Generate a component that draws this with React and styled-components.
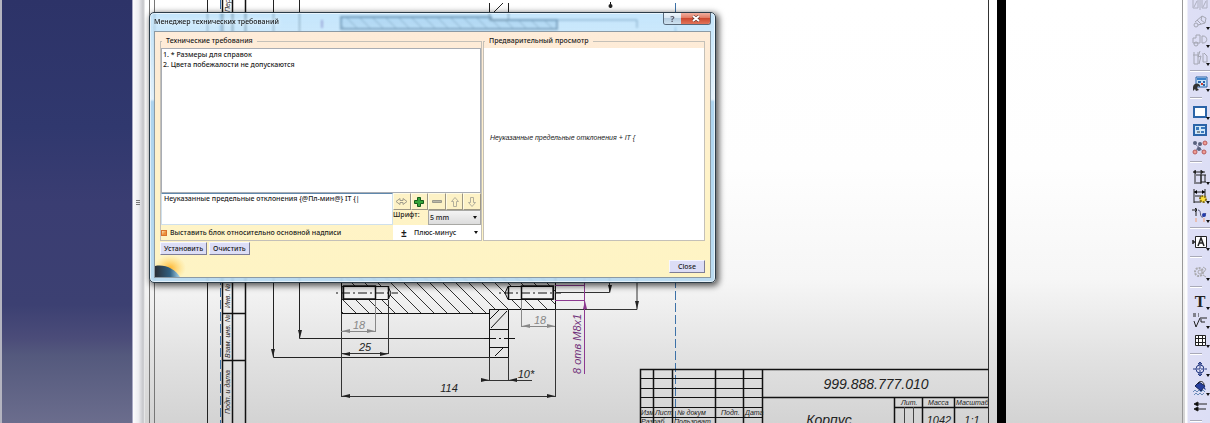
import { useState } from 'react'
import styled, { createGlobalStyle } from 'styled-components'

const GlobalStyle = createGlobalStyle`
    * {
        box-sizing: border-box;
    }
    body {
        margin: 0;
        overflow: hidden;
        font-family: 'Noto Sans', 'Open Sans', sans-serif;
        font-size: 7px;
        font-weight: 500;
        line-height: 10px;
        color: #1a1a1a;
    }
    button, input, select, textarea {
        font: inherit;
        color: inherit;
        margin: 0;
        padding: 0;
    }
`
const Workbench = styled.div`
    display: grid;
    grid-template-columns: 133px 12px 1fr 25px;
    height: 100vh;
    overflow: hidden;
`
const TreePanel = styled.aside`
    border-left: 2px solid #b4b4c0;
    border-right: 1px solid #a9a9c4;
    background: linear-gradient(#2d3368 0%, #30386e 30%, #3a3d72 48%, #3c4072 72%, #4b4c79 80%, #54597d 84%, #6b6d8d 100%);
`
const Splitter = styled.div`
    display: flex;
    align-items: center;
    justify-content: center;
    padding-bottom: 18px;
    background: linear-gradient(90deg, #fbfbfd, #ededf1 45%, #c4c5c9 85%, #f2f2f2);
`
const Grip = styled.div`
    width: 4px;
    height: 5px;
    margin-right: 3px;
    background: repeating-linear-gradient(#777 0 1px, transparent 1px 2px);
`
const Canvas = styled.main`
    position: relative;
    min-width: 0;
    background: linear-gradient(#fff 0%, #fefefe 40%, #f6f6f6 66%, #e2e2e2 84%, #d3d3d3 100%);
`
const Drawing = styled.svg`
    display: block;
    width: 100%;
    height: 100%;
    font-family: 'Liberation Sans', sans-serif;
    font-style: italic;
    font-weight: 400;
    fill: #222;
`

// ---- dialog ----
const Dialog = styled.section`
    position: absolute;
    left: 4px;
    top: 12px;
    width: 567px;
    padding: 0 4px 4px;
    border: 1px solid #2c3c48;
    border-radius: 5px;
    background: linear-gradient(rgba(165, 216, 250, .65), rgba(222, 240, 252, .85) 32%, rgba(164, 208, 238, .9) 33%, rgba(180, 216, 240, .9));
    backdrop-filter: blur(1px);
    box-shadow: inset 0 0 0 1px rgba(255, 255, 255, .6), 2px 2px 6px 1px rgba(0, 0, 0, .65);
`
const TitleBar = styled.header`
    display: flex;
    justify-content: space-between;
    height: 18px;
`
const Title = styled.h1`
    margin: 0;
    font-size: 7px;
    font-weight: 500;
    line-height: 18px;
    text-shadow: 0 0 4px #fff;
`
const WindowButtons = styled.div`
    display: flex;
    height: 12px;
    border: 1px solid #58697a;
    border-top: 0;
    border-radius: 0 0 3px 3px;
    overflow: hidden;
`
const WindowButton = styled.button`
    display: grid;
    place-items: center;
    width: ${p => p.$danger ? 29 : 17}px;
    border: 0;
    font-size: 9px;
    font-weight: 700;
    color: #556;
    background: ${p => p.$danger
        ? 'linear-gradient(#f0b0a0, #e27a62 45%, #cc4a30 50%, #e2745a)'
        : 'linear-gradient(#eef6fc, #d6e6f2 45%, #b5cde0 50%, #cfe2f0)'};
`
const Client = styled.div`
    position: relative;
    padding: 4px 5px;
    border: 1px solid #8c9aa4;
    background: linear-gradient(#feecd9 0%, #fdebd4 15%, #fff3c8 60%, #fef4c4 100%);
`
const Columns = styled.div`
    display: grid;
    grid-template-columns: 322px 1fr;
    gap: 1px;
`
const Group = styled.fieldset`
    display: flex;
    flex-direction: column;
    min-width: 0;
    margin: 0;
    padding: 2px 0 0;
    border: 1px solid #c4c0b8;
`
const Legend = styled.legend`
    margin-left: 1px;
    padding: 0 4px;
`
const Requirements = styled.ol`
    height: 145px;
    margin: 0;
    padding: 1px;
    border: 1px solid #a9adb4;
    background: #fff;
    list-style-position: inside;
`
const Editor = styled.div`
    display: grid;
    grid-template-columns: 1fr 88px;
`
const EditorSide = styled.div`
    display: flex;
    flex-direction: column;
`
const TextArea = styled.textarea`
    display: block;
    height: 32px;
    padding: 0 2px;
    border: 1px solid #cfe0ec;
    border-top-color: #5f88ad;
    outline: 0;
    resize: none;
    background: #fff;
`
const CheckRow = styled.label`
    display: flex;
    align-items: center;
    gap: 3px;
    height: 15px;
`
const CheckBox = styled.input`
    appearance: none;
    width: 6px;
    height: 6px;
    border: 1px solid #d8722c;
    background: linear-gradient(135deg, #fbe3b8, #ee9038 60%);
`
const ToolRow = styled.div`
    display: grid;
    grid-template-columns: repeat(5, 1fr);
    height: 17px;
`
const ToolButton = styled.button`
    display: grid;
    place-items: center;
    border: 1px solid #fffbe6;
    border-right-color: #9c9684;
    border-bottom-color: #9c9684;
    background: #fdf2c6;
`
const FontRow = styled.div`
    display: grid;
    grid-template-columns: 35px 1fr;
    height: 15px;
`
const SelectBox = styled.div`
    position: relative;
    display: flex;
    align-items: center;
    height: 15px;
    border: ${p => p.$raised ? '1px solid #a8a8a4' : '0'};
    background: ${p => p.$raised ? 'linear-gradient(#f4f4f4, #dcdcdc)' : '#fff'};
    &::after {
        content: '';
        position: absolute;
        right: 3px;
        border: 2px solid transparent;
        border-top: 3px solid #111;
        border-bottom: 0;
        pointer-events: none;
    }
`
const Select = styled.select`
    flex: 1;
    min-width: 0;
    padding-left: 1px;
    appearance: none;
    border: 0;
    background: transparent;
`
const PlusMinus = styled.span`
    width: 20px;
    padding-left: 8px;
    font-size: 10px;
    font-weight: 700;
`
const Preview = styled.div`
    flex: 1;
    display: flex;
    align-items: center;
    padding: 0 6px 12px;
    background: #fff;
    font-family: 'Liberation Sans', sans-serif;
    font-style: italic;
    font-weight: 400;
    font-size: 7px;
`
const Actions = styled.div`
    display: flex;
    justify-content: ${p => p.$end ? 'flex-end' : 'flex-start'};
    gap: 2px;
    margin-top: ${p => p.$end ? 5 : 1}px;
`
const PushButton = styled.button`
    height: 13px;
    padding: 0 ${p => p.$wide ? 8 : 3}px;
    border: 1px solid #f6f6ff;
    border-right-color: #7d7d96;
    border-bottom-color: #7d7d96;
    background: #dcddf6;
    line-height: 10px;
`
const Logo = styled.svg`
    position: absolute;
    left: 0;
    bottom: 0;
`

// ---- right toolbar ----
const SideBar = styled.nav`
    display: flex;
    flex-direction: column;
    margin-left: -2px;
    padding-left: 6px;
    border-left: 1px solid #888;
    background: linear-gradient(90deg, #fdfdfd 0 3px, #dedff5 4px, #dcdef5);
    background-clip: padding-box;
    overflow: hidden;
`
const IconGroup = styled.div`
    display: grid;
    flex: none;
    grid-auto-rows: ${p => p.$size}px;
    &:first-child {
        margin-top: -5px;
    }
`
const IconButton = styled.button`
    position: relative;
    display: grid;
    place-items: center;
    border: 0;
    background: transparent;
    &::after {
        content: '';
        display: ${p => p.$menu ? 'block' : 'none'};
        position: absolute;
        right: 0;
        bottom: 1px;
        border: 2px solid transparent;
        border-top: 3px solid #111;
        border-bottom: 0;
    }
`
const Divider = styled.hr`
    flex: none;
    width: ${p => p.$short ? '12px' : '100%'};
    height: 2px;
    margin: ${p => p.$short ? 4 : 3}px 0;
    border: 0;
    border-top: 1px solid #a9aab8;
    border-bottom: 1px solid #fff;
`

const requirements = ['* Размеры для справок', 'Цвета побежалости не допускаются']

const icons = {
    mirror: <g stroke="#aeb0c0" fill="none"><path d="M1 3h5v9H1zM10 3h5v9h-5zM8 1v13M2 11l3-6M11 11l3-6" /></g>,
    roller: <g stroke="#a4a6b2" fill="none"><path d="M3 8l7-6 4 2-1 5-7 2M5 6l4 4M10 2l-1 4 4 3" /><circle cx="4" cy="11" r="2" /></g>,
    views: <g stroke="#a4a6b2" fill="none"><path d="M1 11V6h3V3h4v8H1zM10 4h1c5 0 5 7 0 7h-1z" /><circle cx="4" cy="12" r="2" /></g>,
    section: <g stroke="#a4a6b2" fill="none"><path d="M2 2v12h4V2M8 1l-2 6 3-1-2 8M11 3v9h4V6l-3-3M1 5h5" /></g>,
    newView: <g><path d="M4 1h11v10H4z" fill="#c9e4f8" stroke="#2c63a8" /><path d="M5 2h9v2H5z" fill="#3d82ca" /><path d="M6 6h3M11 6h2M11 9h2" stroke="#2c63a8" strokeWidth="2" /><path d="M9 8h2" stroke="#d04030" strokeWidth="2" /><path d="M1 11c1-5 8-4 7 0l-2-1-1 2 2 2-3 1-1-2-2 2z" fill="#333" /></g>,
    sheet: <path d="M2 3h12v10H2z" fill="#fff" stroke="#2b64a8" strokeWidth="2" />,
    detail: <g><path d="M2 3h12v10H2z" fill="#cfe7f8" stroke="#2b64a8" strokeWidth="2" /><path d="M4 5h3v3H4zM9 5h4v2H9zM9 9h3v2H9z" fill="#3a79bd" /><path d="M5 10h3" stroke="#333" /></g>,
    nodes: <g><path d="M3 4l9 8M8 4L3 12" stroke="#88a" /><g fill="#59627e"><circle cx="3" cy="3" r="2" /><circle cx="8" cy="4" r="2" /><circle cx="7" cy="9" r="2" /></g><g fill="#ee9c94" stroke="#b75c5c"><circle cx="13" cy="3" r="2" /><circle cx="3" cy="12" r="2" /><circle cx="12" cy="12" r="2" /></g></g>,
    dimension: <g stroke="#222" fill="none"><path d="M3 1v14M9 1v14M1 3h12M4 6h5v8H4M9 6h5M9 13h5M13 6v7" /><path d="M1 3l3-2v4zM12 3L9 1v4z" fill="#222" stroke="none" /></g>,
    dimGear: <g><path d="M2 1v14M13 1v7M2 4h11M3 8h6v6H2" stroke="#222" fill="none" /><path d="M2 4l3-2v4zM13 4l-3-2v4z" /><circle cx="11" cy="11" r="3" fill="#ffe23c" stroke="#857018" strokeWidth="2" strokeDasharray="2 1" /></g>,
    curve: <g fill="none"><path d="M0 3h5M4 1v8" stroke="#222" /><path d="M3 5l2-2-2-2" stroke="#222" /><path d="M6 3c4 0 1 8 5 7l3-4" stroke="#557" /><path d="M4 11v4M12 11v4" stroke="#ef9d72" /><circle cx="12" cy="8" r="2" fill="#243ca8" /></g>,
    frame: <g><path d="M3.500 2.500h11v11h-11z" fill="#fff" stroke="#222" /><path d="M6 12l3-8 3 8M7 9h4M1 6v4M1 8h2" stroke="#222" strokeWidth="1.5" fill="none" /></g>,
    gear: <g fill="none" stroke="#a9a9ad"><circle cx="7" cy="8" r="4" strokeWidth="2" strokeDasharray="2 1" /><circle cx="8" cy="8" r="2" /><path d="M11 3l3 2-2 3M11 11l3 2" /></g>,
    text: <text x="8" y="13" textAnchor="middle" fontFamily="Liberation Serif, serif" fontWeight="700" fontSize="16" fill="#222">T</text>,
    roughness: <g stroke="#222" fill="none"><path d="M2 8l2 6 4-9h7M9 6v3h4" /><path d="M1 1h3M6 1h1M1 3h3M6 3h1" /></g>,
    table: <path d="M3.500 3.500h10v10h-10zM3 6.500h10M3 10.500h10M6.500 3v10M10.500 3v10" stroke="#222" fill="#fff" />,
    center: <g stroke="#263b83" fill="none"><circle cx="8" cy="8" r="4" /><path d="M8 1v14M1 8h14" strokeDasharray="3 1" /><path d="M8 1l2 2H6zM8 15l2-2H6z" /></g>,
    fill: <g><path d="M3 6l4-4 6 4-4 5z" fill="#263e9c" stroke="#142254" /><path d="M6 4c1-4 6-3 6 1" stroke="#222" fill="none" /><path d="M12 6l2 4-2-1z" fill="#263e9c" /><path d="M1 12l2-2 2 2 2-2 2 2 2-2 2 2M2 15l2-2 2 2 2-2 2 2 2-2" stroke="#6a8bb8" fill="none" /></g>,
    arrows: <g stroke="#222"><path d="M3 5h12M3 10h11" /><path d="M2 5l4-2v4zM2 10l4-2v4z" /></g>,
}

const toolbar = [
    { size: 18, items: ['mirror', 'roller', 'views', 'section'], label: 'Виды' },
    { size: 18, items: ['newView'], label: 'Новый вид' },
    { size: 18, short: true, items: ['sheet', 'detail', 'nodes'], label: 'Листы' },
    { size: 19, short: true, items: ['dimension', 'dimGear', 'curve'], label: 'Размеры' },
    { size: 20, items: ['frame'], label: 'База' },
    { size: 20, short: true, items: ['gear'], label: 'Настройка' },
    { size: 19, short: true, items: ['text', 'roughness', 'table'], label: 'Аннотации' },
    { size: 19, short: true, items: ['center', 'fill', 'arrows'], label: 'Оформление' },
]
const noMenu = ['detail', 'nodes', 'arrows', 'mirror']

function Arrow({ x, y, dir = 'left', color }) {
    const angle = { left: 0, up: 90, right: 180, down: 270 }[dir]
    return <path d="M0 0l8-2v4z" fill={color} transform={`translate(${x} ${y}) rotate(${angle})`} />
}

function SheetDrawing() {
    return (
        <Drawing viewBox="145 0 1040 423" preserveAspectRatio="xMinYMin slice" role="img" aria-label="Чертёж">
            <defs>
                <pattern id="hatch" width="13" height="13" patternUnits="userSpaceOnUse" patternTransform="translate(4 0)">
                    <path d="M-1 -1L14 14M-1 12l2 2M12 -1l2 2" stroke="#333" />
                </pattern>
            </defs>

            {/* sheet frame */}
            <g fill="none" stroke="#777">
                <path d="M149.5 0V423M154.5 0V423" />
                <path d="M988.5 0V423" stroke="#333" />
                <path d="M1182.5 0V423" stroke="#999" />
            </g>
            <path d="M997 0h9v423h-9z" fill="#000" />
            <g fill="none" stroke="#222">
                <path d="M207.5 0V423M273.5 0V357.5H489M299.5 0V338.5H484" />
                <path d="M222.5 0V423M232.5 0V423M245.5 0V423M222 313.5h23M222 360.5h23" stroke="#111" strokeWidth="1.5" />
            </g>
            <path d="M220.5 0V423M675.5 3V423" stroke="#3d72a8" strokeDasharray="9 3" />
            <g fontSize="7">
                <text transform="translate(230 414) rotate(-90)">Подп. и дата</text>
                <text transform="translate(230 358) rotate(-90)">Взам. инв. №</text>
                <text transform="translate(230 308) rotate(-90)">Инв. №</text>
                <text transform="translate(230 12) rotate(-90)">Пер</text>
            </g>

            {/* part above the dialog */}
            <g stroke="#1d3550">
                <path d="M341 17h150v3h66v9H341z" fill="url(#hatch)" strokeWidth="2" />
                <path d="M341 17h150v3h66v9H341z" fill="#4d86b8" fillOpacity=".35" strokeWidth="2" />
                <path d="M557 20h80v8" fill="none" />
                <path d="M322 20v8" stroke="#7a4a9a" strokeWidth="2" />
            </g>
            <path d="M489.5 3v17h19V3M494 12l9-9" fill="none" stroke="#222" />
            <path d="M610.5 2v6" stroke="#111" />
            <circle cx="610.5" cy="6" r="2" />

            {/* part below the dialog */}
            <path d="M341.5 270v43.5h148v-4h66V270z" fill="url(#hatch)" stroke="#111" />
            <path d="M343 286.5h45l3 6.5-3 6.5h-45zM553 286.5h-45l-3 6.5 3 6.5h45z" fill="#f0f0f0" stroke="#111" />
            <path d="M343.5 286h32v13h-32zM521.5 286h32v13h-32zM388.5 286v13M508.5 286v13" fill="none" stroke="#111" strokeWidth="1.5" />
            <path d="M336 293h62M499 293h62" stroke="#111" strokeDasharray="2 3 9 3" />
            <path d="M489.5 309.5h19v48h-19z" fill="#e6e6e6" stroke="#111" />
            <path d="M489 329.5h20M489 347.5h20M491 328l16-17M490 319l9-9M495 356l8-8" fill="none" stroke="#111" />
            <path d="M484 338.5h31" stroke="#111" strokeDasharray="12 3 2 3" />

            {/* dimensions */}
            <g fill="none" stroke="#333">
                <path d="M341.5 313v84M555.5 309v88M341 396.5h214" />
                <path d="M388.5 300v54M341 353.5h47" />
                <path d="M489.5 357v23M508.5 357v23M481 380.5h51" />
                <path d="M555 309.5h82V270M555 292.5h54.5V270" />
                <path d="M375.5 300v32M341 331.5h34M521.5 300v26M521 326.5h34" stroke="#888" />
                <path d="M555 285.5h30M555 300.5h30M584.5 270v104" stroke="#8c3a90" />
            </g>
            <Arrow x={342} y={396} />
            <Arrow x={555} y={396} dir="right" />
            <Arrow x={342} y={354} />
            <Arrow x={388} y={354} dir="right" />
            <Arrow x={342} y={331} color="#888" />
            <Arrow x={375} y={331} dir="right" color="#888" />
            <Arrow x={522} y={326} color="#888" />
            <Arrow x={555} y={326} dir="right" color="#888" />
            <Arrow x={489} y={380} dir="right" />
            <Arrow x={509} y={380} />
            <Arrow x={273} y={357} dir="down" />
            <Arrow x={300} y={338} dir="down" />
            <Arrow x={610} y={293} dir="down" />
            <Arrow x={637} y={309} dir="down" />
            <Arrow x={585} y={301} dir="up" color="#8c3a90" />
            <g fontSize="11" textAnchor="middle">
                <text x="359" y="329" fill="#888">18</text>
                <text x="540" y="324" fill="#888">18</text>
                <text x="365" y="351">25</text>
                <text x="526" y="378">10*</text>
                <text x="449" y="392">114</text>
            </g>
            <text fontSize="11" fill="#71307a" transform="translate(581 374) rotate(-90)">8 отв М8х1</text>

            {/* title block */}
            <g fill="none" stroke="#111">
                <path d="M640.5 423V369.5h348M653.5 369v54M672.5 369v54M715.5 369v54M743.5 369v54M762.5 369v54" strokeWidth="1.5" />
                <path d="M640 378.5h122M640 388.5h122M640 397.5h122M640 407.5h122M640 417.5h122" />
                <path d="M762 397.5h226M894.5 397v26M922.5 397v26M954.5 397v26M894 407.5h94" strokeWidth="1.5" />
                <path d="M904.5 407v16M913.5 407v16" stroke="#444" />
            </g>
            <g fontSize="7">
                <text x="641" y="415">Изм</text>
                <text x="655" y="415">Лист</text>
                <text x="677" y="415">№ докум</text>
                <text x="721" y="415">Подп.</text>
                <text x="745" y="415">Дата</text>
                <text x="641" y="424">Разраб.</text>
                <text x="674" y="424">Пользоват.</text>
                <text x="901" y="405">Лит.</text>
                <text x="928" y="405">Масса</text>
                <text x="956" y="405">Масштаб</text>
            </g>
            <g textAnchor="middle" fontSize="11">
                <text x="876" y="389" fontSize="14">999.888.777.010</text>
                <text x="829" y="425" fontSize="14">Корпус</text>
                <text x="939" y="424">1042</text>
                <text x="972" y="424">1:1</text>
            </g>
        </Drawing>
    )
}

function RequirementsDialog() {
    const [text, setText] = useState('Неуказанные предельные отклонения {@Пл-мин@} IT {|')
    const [relative, setRelative] = useState(true)

    return (
        <Dialog role="dialog" aria-labelledby="dialog-title">
            <TitleBar>
                <Title id="dialog-title">Менеджер технических требований</Title>
                <WindowButtons>
                    <WindowButton aria-label="Справка">?</WindowButton>
                    <WindowButton $danger aria-label="Закрыть">
                        <svg width="8" height="7" viewBox="0 0 8 7">
                            <path d="M1 1l6 5M7 1L1 6" stroke="#5d3028" strokeWidth="3" />
                            <path d="M1 1l6 5M7 1L1 6" stroke="#fff" strokeWidth="2" />
                        </svg>
                    </WindowButton>
                </WindowButtons>
            </TitleBar>

            <Client>
                <Columns>
                    <Group>
                        <Legend>Технические требования</Legend>
                        <Requirements>
                            {requirements.map(item => <li key={item}>{item}</li>)}
                        </Requirements>
                        <Editor>
                            <EditorSide>
                                <TextArea
                                    aria-label="Текст требования"
                                    value={text}
                                    onChange={e => setText(e.target.value)}
                                />
                                <CheckRow>
                                    <CheckBox
                                        type="checkbox"
                                        checked={relative}
                                        onChange={() => setRelative(!relative)}
                                    />
                                    Выставить блок относительно основной надписи
                                </CheckRow>
                            </EditorSide>
                            <EditorSide>
                                <ToolRow>
                                    <ToolButton aria-label="Заменить">
                                        <svg width="13" height="9" viewBox="0 0 13 9" fill="none" stroke="#a09c8c">
                                            <path d="M1 4.5l4-3v2h3v-2l4 3-4 3v-2H5v2z" />
                                        </svg>
                                    </ToolButton>
                                    <ToolButton aria-label="Добавить">
                                        <svg width="10" height="10" viewBox="0 0 10 10">
                                            <path d="M3.5.5h3v3h3v3h-3v3h-3v-3h-3v-3h3z" fill="#35a53a" stroke="#155c1b" />
                                        </svg>
                                    </ToolButton>
                                    <ToolButton aria-label="Удалить">
                                        <svg width="10" height="4" viewBox="0 0 10 4">
                                            <path d="M.5.5h9v2h-9z" fill="#bbb8a8" stroke="#9c9a8c" />
                                        </svg>
                                    </ToolButton>
                                    <ToolButton aria-label="Вверх">
                                        <svg width="8" height="10" viewBox="0 0 8 10" fill="none" stroke="#b3af9c">
                                            <path d="M4 .5l3.500 4H5.500v5h-3v-5H.5z" />
                                        </svg>
                                    </ToolButton>
                                    <ToolButton aria-label="Вниз">
                                        <svg width="8" height="10" viewBox="0 0 8 10" fill="none" stroke="#b3af9c">
                                            <path d="M4 9.500l3.500-4H5.500v-5h-3v5H.5z" />
                                        </svg>
                                    </ToolButton>
                                </ToolRow>
                                <FontRow>
                                    <label htmlFor="font-size">Шрифт:</label>
                                    <SelectBox $raised>
                                        <Select id="font-size" defaultValue="5 mm">
                                            <option>5 mm</option>
                                        </Select>
                                    </SelectBox>
                                </FontRow>
                                <SelectBox>
                                    <PlusMinus>±</PlusMinus>
                                    <Select aria-label="Символ" defaultValue="Плюс-минус">
                                        <option>Плюс-минус</option>
                                    </Select>
                                </SelectBox>
                            </EditorSide>
                        </Editor>
                    </Group>

                    <Group>
                        <Legend>Предварительный просмотр</Legend>
                        <Preview>Неуказанные предельные отклонения + IT {'{'}</Preview>
                    </Group>
                </Columns>

                <Actions>
                    <PushButton>Установить</PushButton>
                    <PushButton>Очистить</PushButton>
                </Actions>
                <Actions $end>
                    <PushButton $wide>Close</PushButton>
                </Actions>
                <Logo width="32" height="22" viewBox="0 0 32 22">
                    <defs>
                        <radialGradient id="glow">
                            <stop offset="0" stopColor="#ffb52e" />
                            <stop offset="1" stopColor="#ffd76a" stopOpacity="0" />
                        </radialGradient>
                        <linearGradient id="globe">
                            <stop offset="0" stopColor="#2b2f36" />
                            <stop offset=".6" stopColor="#2f5f80" />
                            <stop offset="1" stopColor="#a9d6ec" />
                        </linearGradient>
                    </defs>
                    <ellipse cx="15" cy="13" rx="16" ry="13" fill="url(#glow)" />
                    <path d="M0 11c10-2 20 3 25 11H0z" fill="url(#globe)" />
                </Logo>
            </Client>
        </Dialog>
    )
}

export default function App() {
    return (
        <>
            <GlobalStyle />
            <Workbench>
                <TreePanel />
                <Splitter><Grip /></Splitter>
                <Canvas>
                    <SheetDrawing />
                    <RequirementsDialog />
                </Canvas>
                <SideBar aria-label="Инструменты">
                    {toolbar.map((group, i) => [
                        i > 0 && <Divider key={`d${i}`} $short={group.short} />,
                        <IconGroup key={group.label} $size={group.size}>
                            {group.items.map(name => (
                                <IconButton key={name} aria-label={group.label} $menu={!noMenu.includes(name)}>
                                    <svg width="16" height="16" viewBox="0 0 16 16">{icons[name]}</svg>
                                </IconButton>
                            ))}
                        </IconGroup>,
                    ])}
                    <Divider $short />
                </SideBar>
            </Workbench>
        </>
    )
}
